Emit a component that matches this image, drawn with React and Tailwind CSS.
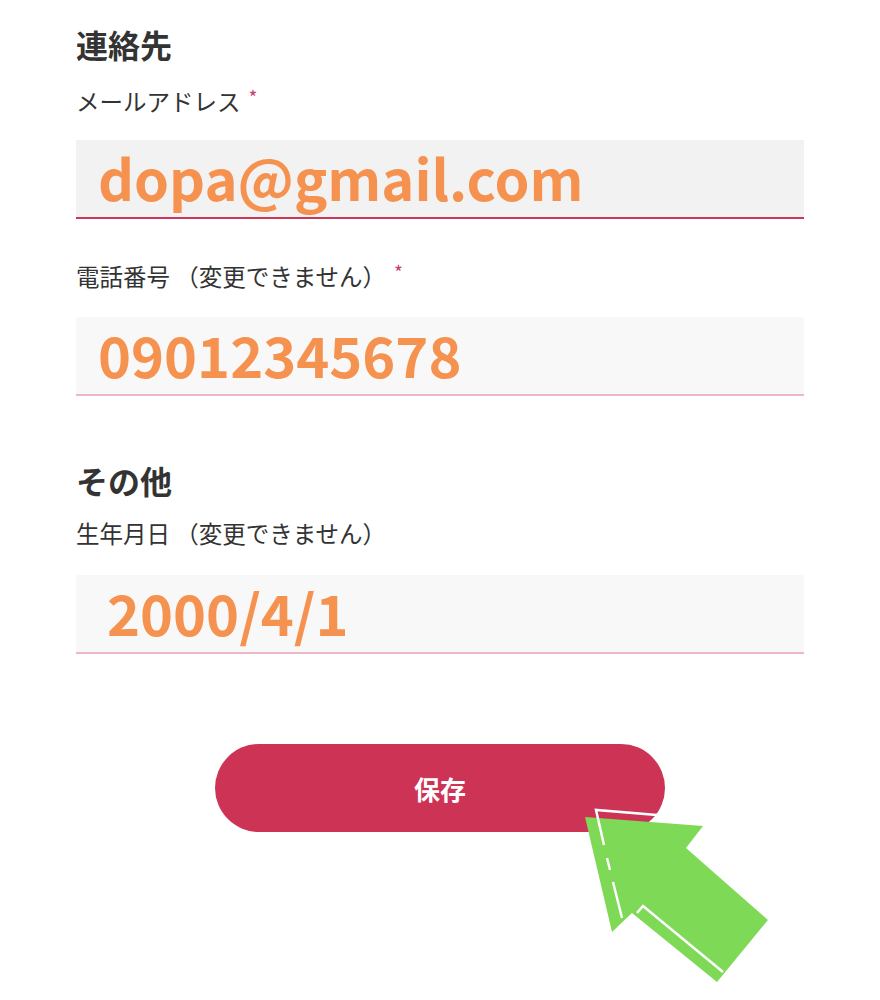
import React from 'react';

const FONT = { fontFamily: '"Noto Sans CJK JP", "Noto Sans", sans-serif' };

function Label({ children, required }) {
  return (
    <div className="flex items-center text-[23.5px] leading-[30px] text-[#333]">
      <span>{children}</span>
      {required && <span className="ml-[8px] -mt-[8px] text-[19px] leading-[20px] text-[#c8406e]">*</span>}
    </div>
  );
}

function Field({ value, strong, pad = 'pl-[22px]' }) {
  return (
    <div
      className={`flex items-center h-[79px] pb-[3px] ${pad} ${
        strong ? 'bg-[#f2f2f2] border-b-2 border-[#c9385a]' : 'bg-[#f8f8f8] border-b-2 border-[#ebb9c6]'
      }`}
    >
      <span className="text-[56px] leading-none font-bold text-[#f69250]">{value}</span>
    </div>
  );
}

function Arrow() {
  return (
    <svg className="absolute left-0 top-0 pointer-events-none" width="880" height="1000" viewBox="0 0 880 1000">
      <polygon
        points="585,817 612,932 632,913 717,982 768,920 686,848 703,826"
        fill="#7ed957"
      />
      <polyline points="657,815 596,810 604,845" fill="none" stroke="#fff" strokeWidth="2.5" />
      <polyline points="607,858 610,870" fill="none" stroke="#fff" strokeWidth="2.5" />
      <polyline points="613,882 622,918" fill="none" stroke="#fff" strokeWidth="2.5" />
      <polyline points="637,913 643,906 723,972" fill="none" stroke="#fff" strokeWidth="2.5" />
    </svg>
  );
}

export default function App() {
  return (
    <div className="relative h-[1000px] bg-white px-[76px]" style={FONT}>
      <h2 className="pt-[24px] text-[32px] leading-[40px] font-bold text-[#333]">連絡先</h2>
      <div className="mt-[22px]">
        <Label required>メールアドレス</Label>
      </div>
      <div className="mt-[24px]">
        <Field value="dopa@gmail.com" strong />
      </div>
      <div className="mt-[42px]">
        <Label required>電話番号 （変更できません）</Label>
      </div>
      <div className="mt-[26px]">
        <Field value="09012345678" />
      </div>

      <h2 className="mt-[64px] text-[32px] leading-[40px] font-bold text-[#333]">その他</h2>
      <div className="mt-[18px]">
        <Label>生年月日 （変更できません）</Label>
      </div>
      <div className="mt-[27px]">
        <Field value="2000/4/1" pad="pl-[31px]" />
      </div>

      <div className="mt-[90px] flex justify-center">
        <button className="w-[450px] h-[88px] rounded-full bg-[#cc3355] text-white text-[26px] font-semibold">
          保存
        </button>
      </div>

      <Arrow />
    </div>
  );
}
